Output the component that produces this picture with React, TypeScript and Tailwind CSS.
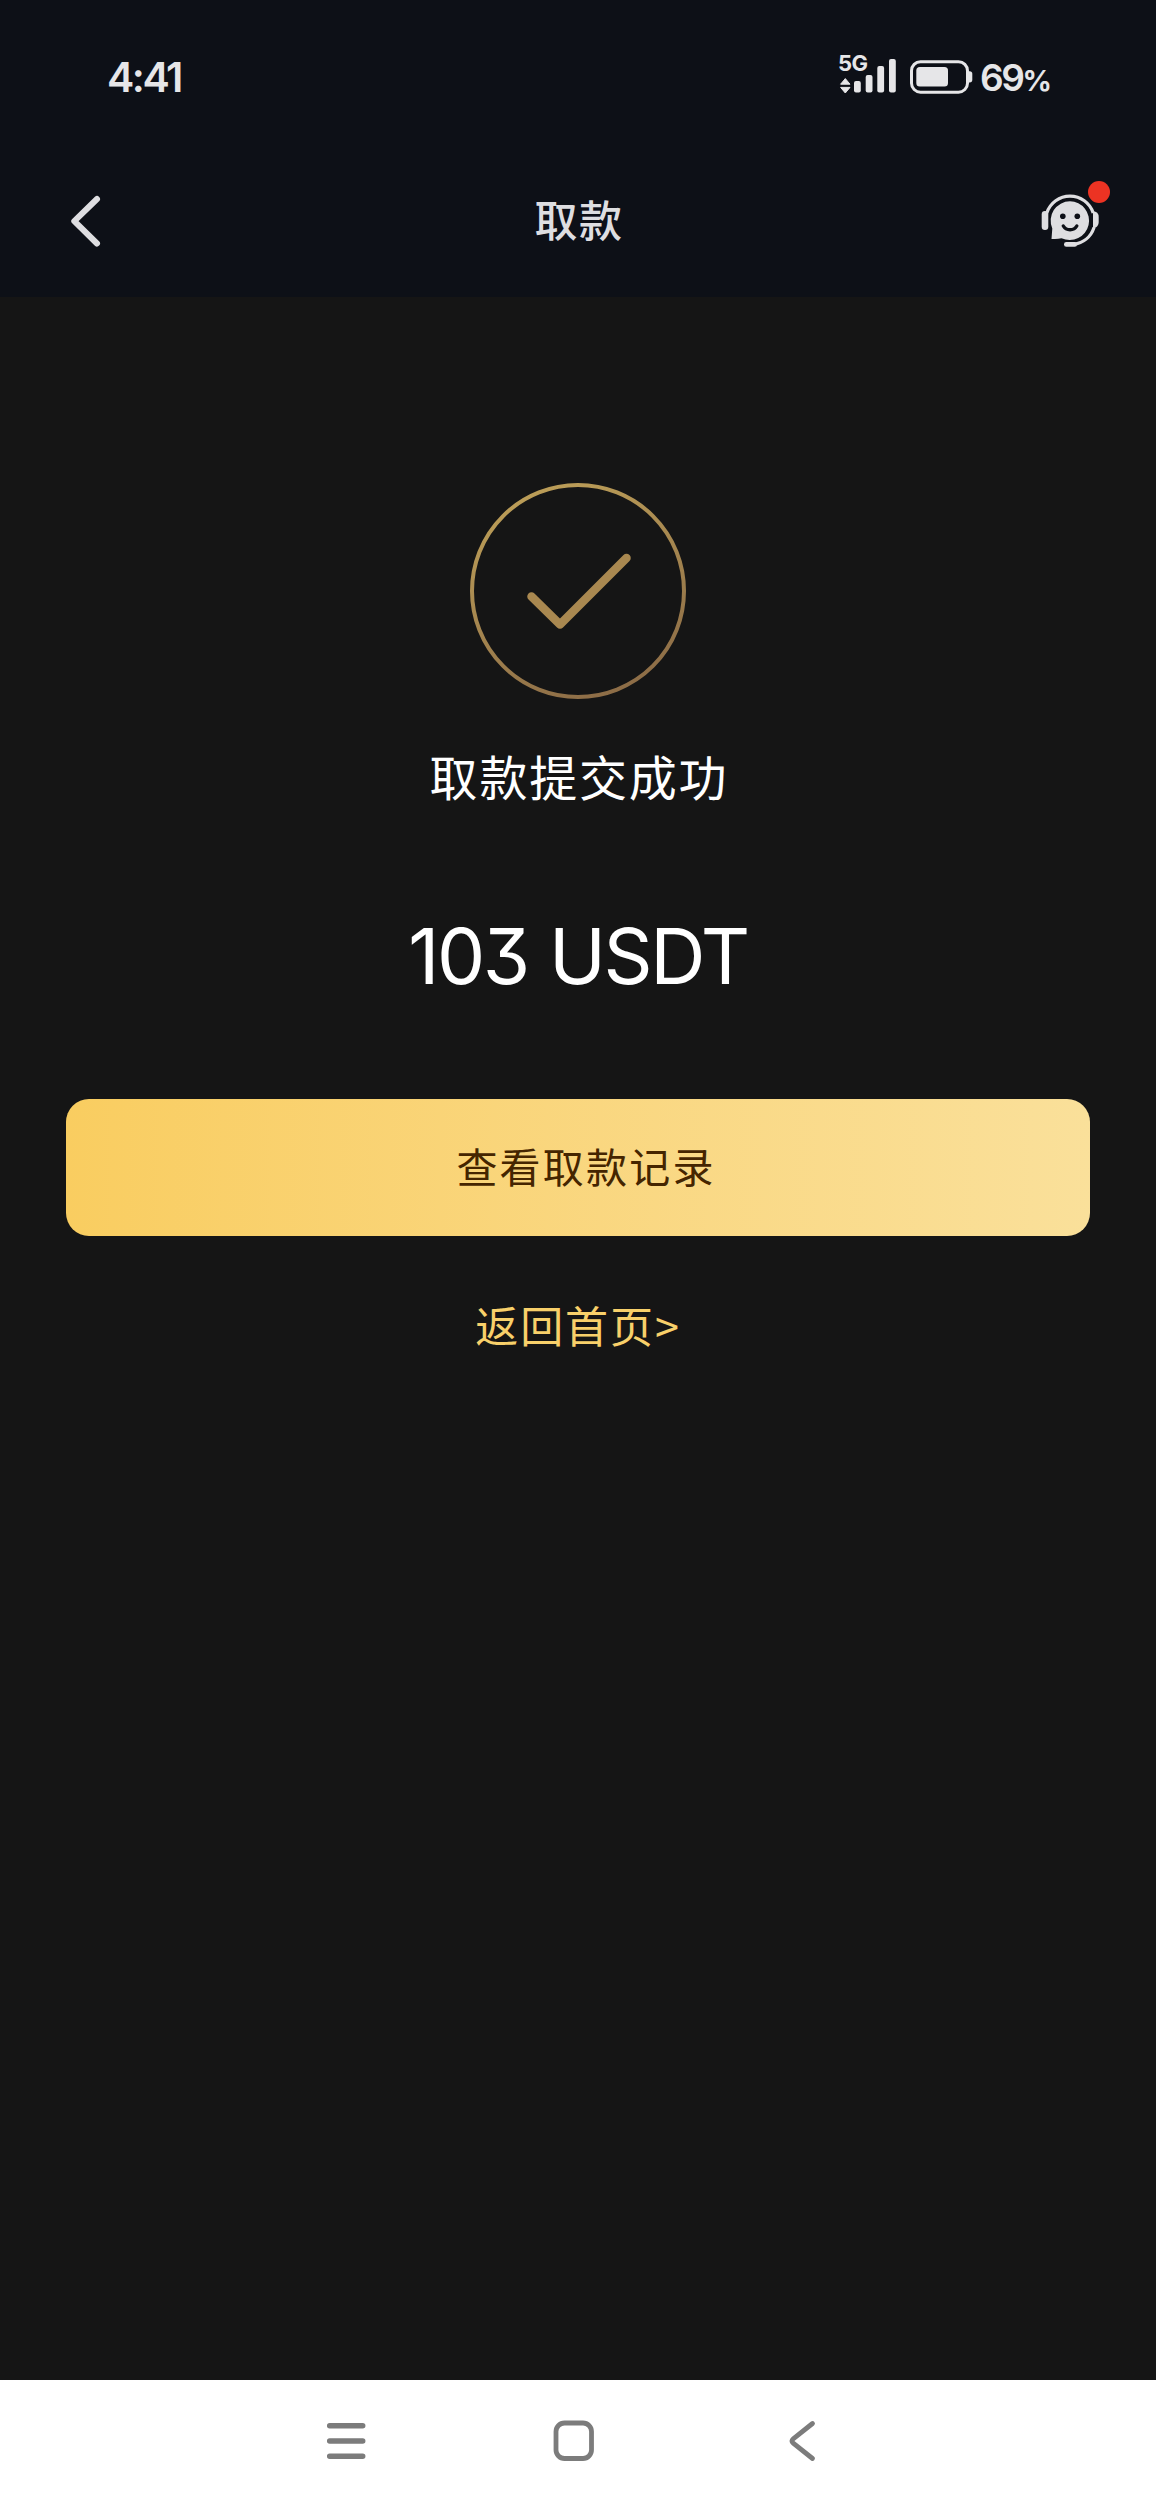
import type { ReactNode } from "react";

const LATIN = "font-['Inter','Noto_Sans_CJK_SC',sans-serif]";
const CJK = "font-['Noto_Sans_CJK_SC','Noto_Sans',sans-serif]";

function SignalIcon() {
  return (
    <svg width="58" height="42" viewBox="0 0 58 42" fill="#e6e6e8">
      <path d="M7.3 26.6 12 32.2H2.6zM7.3 41 2.6 35.4H12z" stroke="#e6e6e8" strokeWidth="1" strokeLinejoin="round" />
      <rect x="16" y="29" width="6.8" height="11.5" rx="2" />
      <rect x="27.7" y="23" width="6.8" height="17.5" rx="2" />
      <rect x="39.3" y="14" width="6.8" height="26.5" rx="2" />
      <rect x="51" y="7" width="6.8" height="33.5" rx="2" />
    </svg>
  );
}

function BatteryIcon() {
  return (
    <svg width="63" height="34" viewBox="0 0 63 34" fill="#e6e6e8">
      <rect x="1.5" y="1.7" width="56" height="30.5" rx="9" fill="none" stroke="#e6e6e8" strokeWidth="3" />
      <rect x="6.3" y="7" width="31.7" height="19.6" rx="3.5" />
      <path d="M58.5 11.2h1.2a2.6 2.6 0 0 1 2.6 2.6v6a2.6 2.6 0 0 1-2.6 2.6h-1.2z" />
    </svg>
  );
}

function StatusBar() {
  return (
    <div className={`flex h-[154px] items-center justify-between pr-[106px] pl-[107px] text-[#e6e6e8] ${LATIN}`}>
      <span className="text-[41px] leading-none font-semibold tracking-[-2.5px]">4:41</span>
      <div className="flex items-center">
        <div className="relative mr-3.5 -mt-2 h-[42px] w-[58px]">
          <SignalIcon />
          <span className="absolute top-0 left-0 text-[22px] leading-none font-bold tracking-[-0.6px]">5G</span>
        </div>
        <BatteryIcon />
        <span className="ml-[7px] text-[37px] leading-none font-semibold tracking-[-2.4px]">
          69<span className="text-[29px] font-bold tracking-[-2px]">%</span>
        </span>
      </div>
    </div>
  );
}

function SupportIcon() {
  return (
    <svg width="60" height="60" viewBox="0 0 60 60" fill="none">
      <path d="M6.8 22A24.4 24.4 0 0 1 53.2 22M54 36.5C51 46 43 52 33.5 53.3" stroke="#dedee1" strokeWidth="3.2" />
      <rect x="1.7" y="20" width="6.6" height="19" rx="3.2" fill="#dedee1" />
      <path d="M53 20.5c3.6 0 5.7 1.9 5.7 5.3v5c0 3.4-2 6.4-5.7 6.4z" fill="#dedee1" />
      <path d="M30 10.3a19.4 19.4 0 1 1-8.5 37c-3 .8-6.5 1-10 .6l.8-10.4A19.4 19.4 0 0 1 30 10.3z" fill="#dedee1" />
      <rect x="24" y="51" width="13" height="4.7" rx="2.3" fill="#dedee1" />
      <circle cx="22.8" cy="25.3" r="2.8" fill="#0d1017" />
      <circle cx="37.3" cy="25.3" r="2.8" fill="#0d1017" />
      <path d="M23.3 35c3 5 10.500 5 13.500 0" stroke="#0d1017" strokeWidth="3.4" strokeLinecap="round" />
    </svg>
  );
}

function TopBar() {
  return (
    <div className="grid h-[143px] grid-cols-3 items-center px-[68px] pb-2.5">
      <svg width="34" height="54" viewBox="0 0 34 54" fill="none">
        <path d="M29 5 6.3 27.2 29 49.5" stroke="#dedee1" strokeWidth="6" strokeLinecap="round" strokeLinejoin="round" />
      </svg>
      <h1 className={`pb-[5px] pl-[2px] text-center text-[43px] leading-none font-medium tracking-[1.5px] text-[#dedee1] ${CJK}`}>
        取款
      </h1>
      <div className="relative -mr-3 justify-self-end">
        <SupportIcon />
        <span className="absolute -top-2.5 -right-2.5 size-[22px] rounded-full bg-[#ec3323]" />
      </div>
    </div>
  );
}

function SuccessMark() {
  return (
    <svg width="218" height="218" viewBox="0 0 218 218" fill="none">
      <defs>
        <linearGradient id="ring" x1="60" y1="0" x2="150" y2="218" gradientUnits="userSpaceOnUse">
          <stop stopColor="#bd9f58" />
          <stop offset="1" stopColor="#8b6b46" />
        </linearGradient>
      </defs>
      <circle cx="109" cy="109" r="106" stroke="url(#ring)" strokeWidth="4" />
      <path d="M62.5 114.5 91 142.5 157.5 76" stroke="#a98850" strokeWidth="8.5" strokeLinecap="round" strokeLinejoin="round" />
    </svg>
  );
}

function NavSlot({ children }: { children: ReactNode }) {
  return <div className="flex h-[46px] w-[46px] items-center justify-center">{children}</div>;
}

function SystemNav() {
  return (
    <nav className="flex h-[130px] items-center justify-between bg-white pr-[331px] pb-2 pl-[323px]">
      <NavSlot>
        <svg width="40" height="42" viewBox="0 0 40 42" stroke="#7c7c7c" strokeWidth="5.5" strokeLinecap="round">
          <path d="M3.7 5.7h33M3.7 21h33M3.7 36.3h33" />
        </svg>
      </NavSlot>
      <NavSlot>
        <svg width="42" height="42" viewBox="0 0 42 42" fill="none">
          <rect x="3" y="3" width="35.5" height="35.5" rx="8.5" stroke="#7c7c7c" strokeWidth="4.8" />
        </svg>
      </NavSlot>
      <NavSlot>
        <svg width="28" height="42" viewBox="0 0 28 42" fill="none">
          <path d="M24.5 3.5 5.2 18.8c-1.7 1.4-1.7 3 0 4.4L24.5 38.5" stroke="#7c7c7c" strokeWidth="4.8" strokeLinecap="round" />
        </svg>
      </NavSlot>
    </nav>
  );
}

export default function App() {
  return (
    <div className="flex h-[2510px] w-[1156px] flex-col overflow-hidden bg-[#151515]">
      <header className="bg-[#0d1017]">
        <StatusBar />
        <TopBar />
      </header>

      <main className="flex flex-1 flex-col items-center px-[66px] pt-[185px]">
        <SuccessMark />
        <p className={`mt-[50px] pl-[2px] text-[48px] leading-[50px] tracking-[1.8px] text-white ${CJK}`}>取款提交成功</p>
        <p
          className={`mt-[116px] text-[76.5px] leading-[80px] tracking-[-2.4px] text-white [word-spacing:2px] [font-feature-settings:'cv09'] ${LATIN}`}
        >
          103 USDT
        </p>
        <button
          className={`mt-[103px] h-[137px] w-full rounded-[23px] bg-linear-to-r from-[#f9cd60] to-[#fae09a] pb-[5px] pl-[16px] text-[41px] leading-none tracking-[2.2px] text-[#452500] ${CJK}`}
        >
          查看取款记录
        </button>
        <a className={`mt-[63px] text-[43px] leading-[50px] tracking-[1.9px] text-[#f8d06a] ${CJK}`}>返回首页&gt;</a>
      </main>

      <SystemNav />
    </div>
  );
}
